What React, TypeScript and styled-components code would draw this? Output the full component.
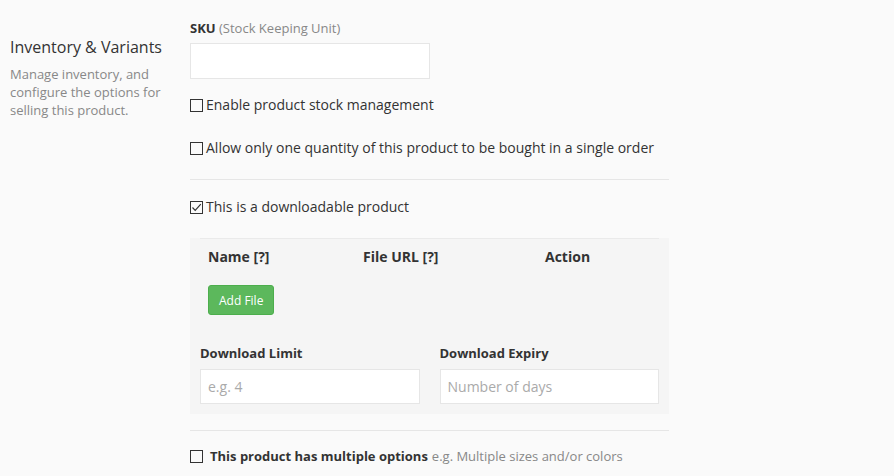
import React from 'react';
import styled, { createGlobalStyle } from 'styled-components';

const GlobalStyle = createGlobalStyle`
    body {
        margin: 0;
        background: #fafafa;
        font-family: 'Open Sans', 'Liberation Sans', sans-serif;
        color: #333;
    }
`;

const Box: React.FC<{ checked?: boolean }> = ({ checked }) => (
    <StyledBox>
        {checked ? (
            <svg width="11" height="11" viewBox="0 0 11 11">
                <polyline points="1.5,5.5 4.2,8.3 9.8,2.2" fill="none" stroke="#333" strokeWidth="1.2" />
            </svg>
        ) : null}
    </StyledBox>
);

export default function App() {
    return (
        <>
            <GlobalStyle />
            <StyledPage>
                <StyledIntro>
                    <h2>Inventory &amp; Variants</h2>
                    <p>Manage inventory, and configure the options for selling this product.</p>
                </StyledIntro>
                <StyledForm>
                    <StyledLabel>
                        <b>SKU</b> <em>(Stock Keeping Unit)</em>
                    </StyledLabel>
                    <StyledInput type="text" width="240px" />

                    <StyledCheck style={{ marginTop: 16 }}>
                        <Box />
                        Enable product stock management
                    </StyledCheck>
                    <StyledCheck style={{ marginTop: 23 }}>
                        <Box />
                        Allow only one quantity of this product to be bought in a single order
                    </StyledCheck>
                    <StyledRule style={{ marginTop: 21 }} />
                    <StyledCheck style={{ marginTop: 17 }}>
                        <Box checked />
                        This is a downloadable product
                    </StyledCheck>

                    <StyledPanel>
                        <StyledHead>
                            <span>Name [?]</span>
                            <span>File URL [?]</span>
                            <span>Action</span>
                        </StyledHead>
                        <StyledButton>Add File</StyledButton>
                        <StyledFields>
                            <div>
                                <StyledFieldLabel>Download Limit</StyledFieldLabel>
                                <StyledInput type="text" placeholder="e.g. 4" />
                            </div>
                            <div>
                                <StyledFieldLabel>Download Expiry</StyledFieldLabel>
                                <StyledInput type="text" placeholder="Number of days" />
                            </div>
                        </StyledFields>
                    </StyledPanel>

                    <StyledRule style={{ marginTop: 16 }} />
                    <StyledOption>
                        <Box />
                        <b>This product has multiple options</b>
                        <em>e.g. Multiple sizes and/or colors</em>
                    </StyledOption>
                </StyledForm>
            </StyledPage>
        </>
    );
}

const StyledPage = styled.div`
    display: flex;
    width: 894px;
    height: 476px;
    overflow: hidden;
`;

const StyledIntro = styled.section`
    width: 170px;
    padding: 37px 0 0 10px;
    h2 {
        margin: 0;
        font-size: 16px;
        font-weight: 400;
        line-height: 20px;
        color: #333;
    }
    p {
        margin: 8px 0 0;
        font-size: 13px;
        line-height: 18px;
        color: #888;
    }
`;

const StyledForm = styled.section`
    width: 479px;
    padding-top: 19px;
    margin-left: 10px;
`;

const StyledLabel = styled.div`
    font-size: 13px;
    line-height: 18px;
    margin-bottom: 6px;
    b {
        font-weight: 700;
        color: #333;
    }
    em {
        font-style: normal;
        color: #888;
    }
`;

const StyledInput = styled.input<{ width?: string }>`
    box-sizing: border-box;
    display: block;
    width: ${(p) => p.width || '100%'};
    height: 36px;
    padding: 6px 7px;
    border: 1px solid #e6e6e6;
    background: #fff;
    font-family: inherit;
    font-size: 14px;
    color: #333;
    outline: none;
    &::placeholder {
        color: #aaa;
    }
`;

const StyledCheck = styled.label`
    display: flex;
    align-items: center;
    gap: 3px;
    font-size: 14px;
    line-height: 20px;
    color: #333;
`;

const StyledBox = styled.span`
    box-sizing: border-box;
    display: inline-flex;
    align-items: center;
    justify-content: center;
    width: 13px;
    height: 13px;
    border: 1px solid #333;
    flex-shrink: 0;
`;

const StyledRule = styled.hr`
    margin: 0;
    border: 0;
    border-top: 1px solid #e6e6e6;
`;

const StyledPanel = styled.div`
    margin-top: 21px;
    background: #f5f5f5;
    padding: 0 10px 10px;
`;

const StyledHead = styled.div`
    display: grid;
    grid-template-columns: 155px 182px 1fr;
    border-top: 1px solid #eaeaea;
    padding: 8px 8px 10px;
    font-size: 14px;
    line-height: 20px;
    font-weight: 700;
    color: #333;
`;

const StyledButton = styled.button`
    margin: 8px 0 0 8px;
    height: 30px;
    padding: 0 10px;
    border: 1px solid #4cae4c;
    border-radius: 3px;
    background: #5cb85c;
    color: #fff;
    font-family: inherit;
    font-size: 12px;
`;

const StyledFields = styled.div`
    display: grid;
    grid-template-columns: 1fr 1fr;
    gap: 20px;
    margin-top: 29px;
    input {
        height: 35px;
    }
`;

const StyledFieldLabel = styled.div`
    font-size: 13px;
    font-weight: 700;
    line-height: 18px;
    margin-bottom: 7px;
`;

const StyledOption = styled.label`
    display: flex;
    align-items: center;
    margin-top: 15px;
    font-size: 13px;
    line-height: 20px;
    b {
        margin-left: 7px;
        color: #333;
    }
    em {
        font-style: normal;
        margin-left: 4px;
        color: #888;
    }
`;
